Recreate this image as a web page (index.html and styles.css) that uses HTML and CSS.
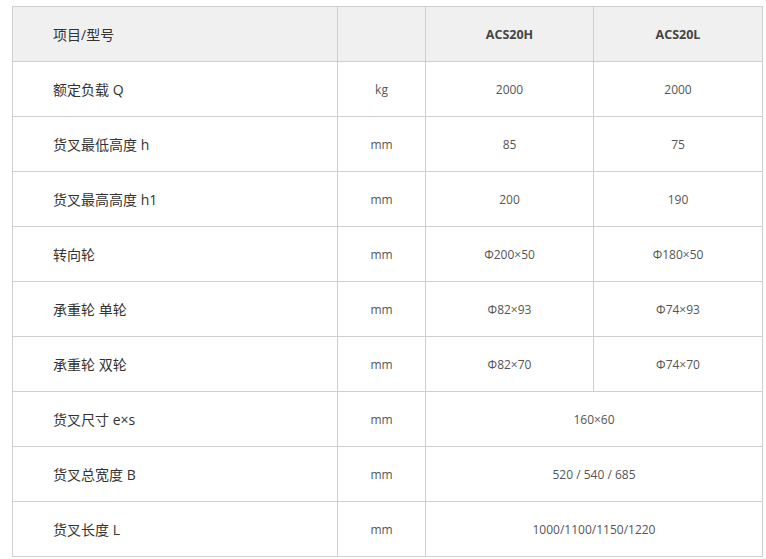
FILE: index.html
```html
<!DOCTYPE html>
<html lang="zh">
<head>
<meta charset="utf-8">
<link rel="stylesheet" href="styles.css">
</head>
<body>
<table class="spec">
  <colgroup>
    <col class="c1"><col class="c2"><col class="c3"><col class="c4">
  </colgroup>
  <tr class="head">
    <td class="name">项目/型号</td><td></td><td class="model">ACS20H</td><td class="model">ACS20L</td>
  </tr>
  <tr><td class="name">额定负载 Q</td><td>kg</td><td>2000</td><td>2000</td></tr>
  <tr><td class="name">货叉最低高度 h</td><td>mm</td><td>85</td><td>75</td></tr>
  <tr><td class="name">货叉最高高度 h1</td><td>mm</td><td>200</td><td>190</td></tr>
  <tr><td class="name">转向轮</td><td>mm</td><td>Φ200×50</td><td>Φ180×50</td></tr>
  <tr><td class="name">承重轮 单轮</td><td>mm</td><td>Φ82×93</td><td>Φ74×93</td></tr>
  <tr><td class="name">承重轮 双轮</td><td>mm</td><td>Φ82×70</td><td>Φ74×70</td></tr>
  <tr><td class="name">货叉尺寸 e×s</td><td>mm</td><td colspan="2">160×60</td></tr>
  <tr><td class="name">货叉总宽度 B</td><td>mm</td><td colspan="2">520 / 540 / 685</td></tr>
  <tr><td class="name">货叉长度 L</td><td>mm</td><td colspan="2">1000/1100/1150/1220</td></tr>
</table>
</body>
</html>
```
FILE: styles.css
```css
html, body {
  margin: 0;
  padding: 0;
  background: #fff;
}
body {
  padding: 6px 0 0 12px;
  font-family: "Open Sans", "Noto Sans CJK SC", sans-serif;
}
.spec {
  border-collapse: collapse;
  table-layout: fixed;
  width: 750px;
}
.c1 { width: 325px; }
.c2 { width: 88px; }
.c3 { width: 168px; }
.c4 { width: 169px; }
.spec td {
  border: 1px solid #cfcfcf;
  height: 54px;
  padding: 0;
  text-align: center;
  vertical-align: middle;
  font-size: 12px;
  color: #555;
}
.spec td.name {
  text-align: left;
  padding-left: 40px;
  font-size: 14px;
  color: #333;
}
.head td {
  background: #f0f0f0;
}
.head td.model {
  font-weight: bold;
  color: #444;
  font-size: 12.5px;
}
```
